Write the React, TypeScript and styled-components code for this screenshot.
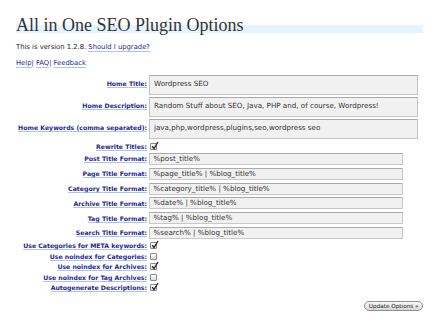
import React from "react";
import styled, { createGlobalStyle } from "styled-components";

const Global = createGlobalStyle`
  html, body { margin: 0; padding: 0; background: #fff; }
  body { font-family: "DejaVu Sans", Verdana, sans-serif; color: #333; }
`;

const Wrap = styled.div`
  width: 437px;
  height: 325px;
  padding: 0 14px 0 16px;
  box-sizing: border-box;
  overflow: hidden;
`;

const Title = styled.h2`
  margin: 0;
  padding-top: 15px;
  height: 18px;
  font-family: "Liberation Serif", "Times New Roman", serif;
  font-weight: normal;
  font-size: 18px;
  line-height: 20px;
  color: #333;
  background: linear-gradient(transparent 25px, #e5f3ff 25px) no-repeat;
  white-space: nowrap;
`;

const Line = styled.p<{ $top: number }>`
  margin: ${(p) => p.$top}px 0 0 0;
  font-size: 6.8px;
  line-height: 9px;
  color: #222;
`;

const Link = styled.a<{ $bold?: boolean }>`
  color: #1f1f96;
  text-decoration: none;
  border-bottom: 1px solid #a9c6ee;
  font-weight: ${(p) => (p.$bold ? "bold" : "normal")};
`;

const Sep = styled.span`
  color: #1f1f96;
`;

const Form = styled.div`
  margin-top: 7px;
  display: grid;
  grid-template-columns: 131px 1fr;
  column-gap: 2px;
  align-items: center;
`;

const Label = styled.div<{ $top?: boolean }>`
  justify-self: end;
  align-self: ${(p) => (p.$top ? "start" : "center")};
  margin-top: ${(p) => (p.$top ? "4px" : "0")};
  text-align: right;
  font-size: 6.2px;
  line-height: 9px;
  white-space: nowrap;
`;

const Area = styled.div`
  width: 269px;
  height: 20px;
  margin-bottom: 2px;
  box-sizing: border-box;
  border: 1px solid #c4c4c4;
  border-top-color: #a8a8a8;
  background: #f1f1f1;
  padding: 3px 4px;
  font-size: 7.15px;
  line-height: 9px;
  color: #333;
  white-space: nowrap;
  overflow: hidden;
`;

const Field = styled.div`
  width: 254px;
  height: 12px;
  margin: 1.4px 0;
  box-sizing: border-box;
  border: 1px solid #c8c8c8;
  border-top-color: #aaa;
  background: #f1f1f1;
  padding: 0 3.5px;
  font-size: 7.15px;
  line-height: 10px;
  color: #333;
  white-space: nowrap;
`;

const BoxCell = styled.div`
  height: 10.6px;
  display: flex;
  align-items: center;
`;

const Box = styled.span`
  position: relative;
  display: inline-block;
  width: 7px;
  height: 7px;
  margin-left: 1px;
  box-sizing: border-box;
  border: 1px solid #8a8a8a;
  border-radius: 1px;
  background: linear-gradient(#fdfdfd, #dcdcdc);
`;

const Tick = styled.svg`
  position: absolute;
  left: 0;
  top: -3px;
  width: 8px;
  height: 9px;
  overflow: visible;
`;

const Footer = styled.div`
  display: flex;
  justify-content: flex-end;
  margin-top: 8px;
`;

const Button = styled.span`
  display: inline-block;
  height: 10px;
  box-sizing: border-box;
  padding: 0 3.5px;
  border: 1px solid #8f8f8f;
  border-radius: 6px;
  background: linear-gradient(#fafafa, #d8d8d8);
  font-size: 5.7px;
  line-height: 8px;
  color: #222;
  white-space: nowrap;
`;

const Check = ({ on }: { on: boolean }) => (
  <BoxCell>
    <Box>
      {on && (
        <Tick viewBox="0 0 8 9">
          <path d="M1.2 5.2 L3 7.6 L7 1" fill="none" stroke="#222" strokeWidth="1.3" />
        </Tick>
      )}
    </Box>
  </BoxCell>
);

const areas = [
  ["Home Title:", "Wordpress SEO"],
  ["Home Description:", "Random Stuff about SEO, Java, PHP and, of course, Wordpress!"],
  ["Home Keywords (comma separated):", "java,php,wordpress,plugins,seo,wordpress seo"],
];

const fields = [
  ["Post Title Format:", "%post_title%"],
  ["Page Title Format:", "%page_title% | %blog_title%"],
  ["Category Title Format:", "%category_title% | %blog_title%"],
  ["Archive Title Format:", "%date% | %blog_title%"],
  ["Tag Title Format:", "%tag% | %blog_title%"],
  ["Search Title Format:", "%search% | %blog_title%"],
];

const checks: [string, boolean][] = [
  ["Use Categories for META keywords:", true],
  ["Use noindex for Categories:", false],
  ["Use noindex for Archives:", true],
  ["Use noindex for Tag Archives:", false],
  ["Autogenerate Descriptions:", true],
];

export default function App() {
  return (
    <Wrap>
      <Global />
      <Title>All in One SEO Plugin Options</Title>
      <Line $top={10}>
        This is version 1.2.8. <Link>Should I upgrade?</Link>
      </Line>
      <Line $top={7}>
        <Link>Help</Link>
        <Sep>| </Sep>
        <Link>FAQ</Link>
        <Sep>| </Sep>
        <Link>Feedback</Link>
      </Line>
      <Form>
        {areas.map(([l, v]) => (
          <React.Fragment key={l}>
            <Label $top>
              <Link $bold>{l}</Link>
            </Label>
            <Area>{v}</Area>
          </React.Fragment>
        ))}
        <Label>
          <Link $bold>Rewrite Titles:</Link>
        </Label>
        <Check on />
        {fields.map(([l, v]) => (
          <React.Fragment key={l}>
            <Label>
              <Link $bold>{l}</Link>
            </Label>
            <Field>{v}</Field>
          </React.Fragment>
        ))}
        {checks.map(([l, on]) => (
          <React.Fragment key={l}>
            <Label>
              <Link $bold>{l}</Link>
            </Label>
            <Check on={on} />
          </React.Fragment>
        ))}
      </Form>
      <Footer>
        <Button>Update Options »</Button>
      </Footer>
    </Wrap>
  );
}
